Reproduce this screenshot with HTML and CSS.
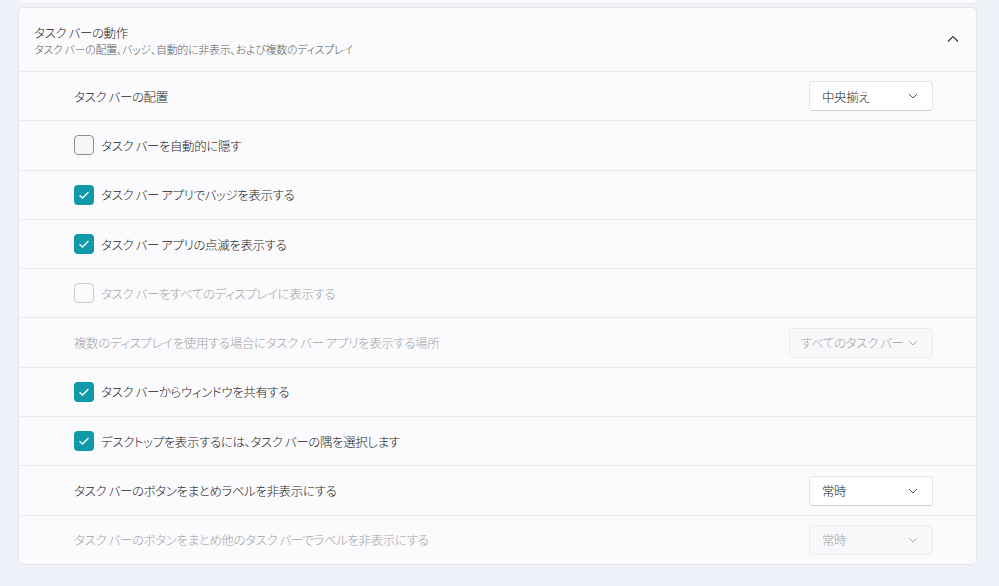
FILE: index.html
```html
<!DOCTYPE html>
<html lang="ja">
<head>
  <meta charset="UTF-8">
  <meta name="viewport" content="width=device-width, initial-scale=1.0">
  <title>タスク バーの動作</title>
  <link rel="stylesheet" href="styles.css">
</head>
<body>
  <div class="page">
    <div class="prev-card"></div>

    <section class="card">
      <header class="card-head">
        <div class="head-text">
          <div class="title">タスク バーの動作</div>
          <div class="subtitle">タスク バーの配置、バッジ、自動的に非表示、および複数のディスプレイ</div>
        </div>
        <svg class="chev-up" width="12" height="8" viewBox="0 0 12 8">
          <path d="M1 6.5 L6 1.5 L11 6.5" fill="none" stroke="#333" stroke-width="1.1"/>
        </svg>
      </header>

      <div class="row">
        <span class="label">タスク バーの配置</span>
        <div class="select">
          <span>中央揃え</span>
          <svg width="10" height="6" viewBox="0 0 10 6"><path d="M1 1 L5 5 L9 1" fill="none" stroke="#555" stroke-width="1"/></svg>
        </div>
      </div>

      <div class="row">
        <span class="check"></span>
        <span class="label">タスク バーを自動的に隠す</span>
      </div>

      <div class="row">
        <span class="check on">
          <svg width="12" height="10" viewBox="0 0 12 10"><path d="M1.5 5.2 L4.5 8 L10.5 2" fill="none" stroke="#fff" stroke-width="1.3"/></svg>
        </span>
        <span class="label">タスク バー アプリでバッジを表示する</span>
      </div>

      <div class="row">
        <span class="check on">
          <svg width="12" height="10" viewBox="0 0 12 10"><path d="M1.5 5.2 L4.5 8 L10.5 2" fill="none" stroke="#fff" stroke-width="1.3"/></svg>
        </span>
        <span class="label">タスク バー アプリの点滅を表示する</span>
      </div>

      <div class="row off">
        <span class="check"></span>
        <span class="label">タスク バーをすべてのディスプレイに表示する</span>
      </div>

      <div class="row off">
        <span class="label">複数のディスプレイを使用する場合にタスク バー アプリを表示する場所</span>
        <div class="select wide">
          <span>すべてのタスク バー</span>
          <svg width="10" height="6" viewBox="0 0 10 6"><path d="M1 1 L5 5 L9 1" fill="none" stroke="#aaa" stroke-width="1"/></svg>
        </div>
      </div>

      <div class="row">
        <span class="check on">
          <svg width="12" height="10" viewBox="0 0 12 10"><path d="M1.5 5.2 L4.5 8 L10.5 2" fill="none" stroke="#fff" stroke-width="1.3"/></svg>
        </span>
        <span class="label">タスク バーからウィンドウを共有する</span>
      </div>

      <div class="row">
        <span class="check on">
          <svg width="12" height="10" viewBox="0 0 12 10"><path d="M1.5 5.2 L4.5 8 L10.5 2" fill="none" stroke="#fff" stroke-width="1.3"/></svg>
        </span>
        <span class="label">デスクトップを表示するには、タスク バーの隅を選択します</span>
      </div>

      <div class="row">
        <span class="label">タスク バーのボタンをまとめラベルを非表示にする</span>
        <div class="select">
          <span>常時</span>
          <svg width="10" height="6" viewBox="0 0 10 6"><path d="M1 1 L5 5 L9 1" fill="none" stroke="#555" stroke-width="1"/></svg>
        </div>
      </div>

      <div class="row off">
        <span class="label">タスク バーのボタンをまとめ他のタスク バーでラベルを非表示にする</span>
        <div class="select">
          <span>常時</span>
          <svg width="10" height="6" viewBox="0 0 10 6"><path d="M1 1 L5 5 L9 1" fill="none" stroke="#aaa" stroke-width="1"/></svg>
        </div>
      </div>
    </section>
  </div>
</body>
</html>
```

FILE: styles.css
```css
:root {
  --bg: #eef2f8;
  --card: #fbfbfd;
  --line: #e8e9ec;
  --text: #1b1b1b;
  --muted: #5c5c5c;
  --dim: #a2a2a4;
  --accent: #0e9aa7;
}

body {
  margin: 0;
  background-color: var(--bg);
  font-family: "Noto Sans CJK JP", "Noto Sans", sans-serif;
  font-feature-settings: "palt";
  font-weight: 300;
  color: var(--text);
}

.page {
  padding: 0 22px 0 18px;
}

.prev-card {
  height: 3px;
  background-color: var(--card);
  border: 1px solid var(--line);
  border-top: none;
  border-radius: 0 0 4px 4px;
  margin-bottom: 3px;
}

.card {
  background-color: var(--card);
  border: 1px solid #e3e5ea;
  border-radius: 5px;
  display: flex;
  flex-direction: column;
}

.card-head {
  height: 63px;
  display: flex;
  align-items: center;
  justify-content: space-between;
  padding: 0 17px 0 15px;
}

.head-text {
  display: flex;
  flex-direction: column;
  gap: 1px;
  margin-top: 2px;
}

.title {
  font-size: 12.5px;
  letter-spacing: -0.4px;
  line-height: 16px;
}

.subtitle {
  font-size: 11px;
  letter-spacing: -0.3px;
  line-height: 15px;
  color: var(--muted);
}

.chev-up {
  margin-bottom: 2px;
}

.row {
  height: 48.3px;
  border-top: 1px solid var(--line);
  display: flex;
  align-items: center;
  gap: 7px;
  padding: 0 43px 0 55px;
  font-size: 12.5px;
  letter-spacing: -0.4px;
}

.label {
  flex: 1;
  white-space: nowrap;
}

.row.off {
  color: var(--dim);
}

.check {
  width: 18px;
  height: 18px;
  border: 1px solid #8f8f92;
  border-radius: 4px;
  background-color: #f6f6f7;
  display: flex;
  align-items: center;
  justify-content: center;
}

.row.off .check {
  border-color: #cdcdcf;
  background-color: transparent;
}

.check.on {
  width: 20px;
  height: 20px;
  border: none;
  background-color: var(--accent);
}

.select {
  width: 124px;
  height: 30px;
  box-sizing: border-box;
  display: flex;
  align-items: center;
  justify-content: space-between;
  padding: 0 14px 0 12px;
  background-color: #fff;
  border: 1px solid #e5e5e7;
  border-bottom-color: #cfcfd2;
  border-radius: 4px;
  white-space: nowrap;
}

.select.wide {
  width: 144px;
  padding-left: 11px;
}

.row.off .select {
  background-color: #f8f8fa;
  border-color: #ececee;
}
```
